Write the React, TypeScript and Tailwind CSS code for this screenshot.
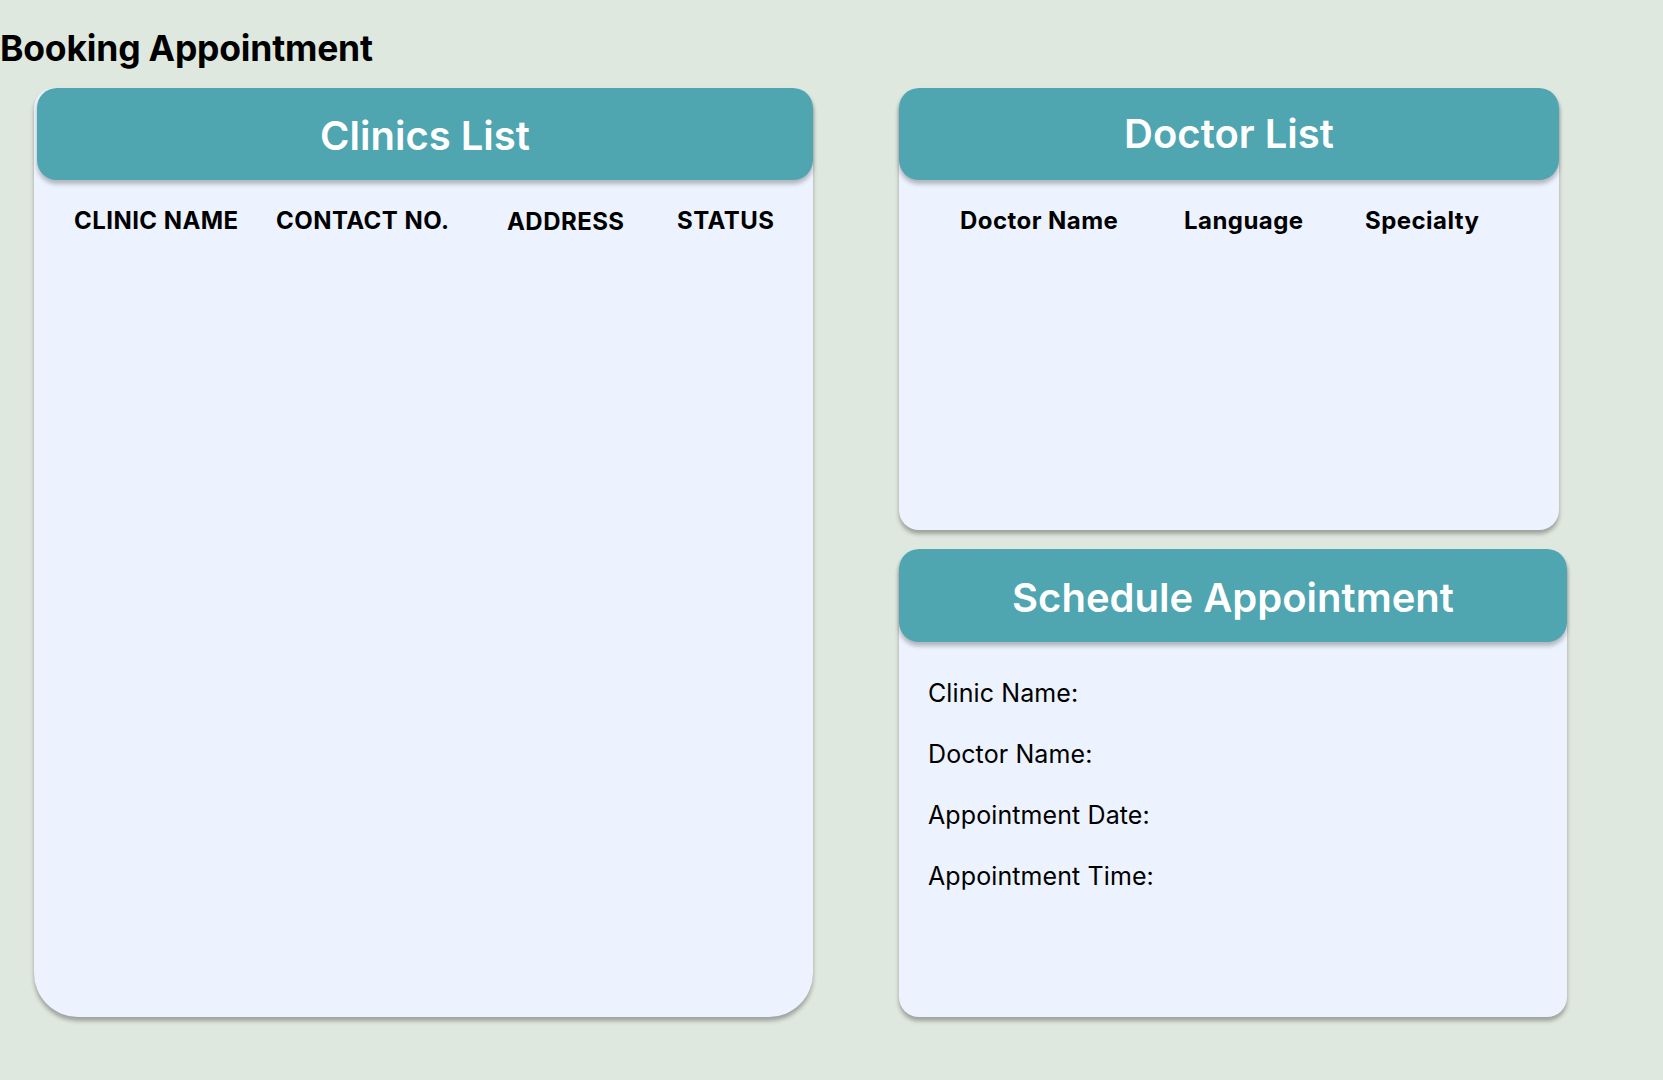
import React from "react";

const font = { fontFamily: "Inter, 'Noto Sans', sans-serif" };

export default function App() {
  return (
    <div className="min-h-[1080px] w-[1663px] bg-[#dfe8df] text-black" style={font}>
      <h1 className="pt-[29px] text-[35.5px] font-bold leading-[40px] tracking-[-0.2px]">Booking Appointment</h1>
      <div className="mt-[19px] flex items-start">
        {/* Clinics List */}
        <div className="ml-[34px] flex h-[929px] w-[779px] flex-col rounded-b-[44px] rounded-t-[20px] bg-[#ecf2fe] shadow-[0_4px_4px_rgba(0,0,0,0.3)]">
          <div className="ml-[3px] flex h-[92px] items-center justify-center rounded-[20px] bg-[#4fa5b0] shadow-[0_4px_4px_rgba(0,0,0,0.25)]">
            <span className="pt-[4px] text-[40px] font-semibold leading-none text-white">Clinics List</span>
          </div>
          <div className="mt-[27px] flex pl-[40px] text-[24px] font-bold leading-[28px] tracking-[0.45px]">
            <div className="w-[202px]">CLINIC NAME</div>
            <div className="w-[231px]">CONTACT NO.</div>
            <div className="w-[170px] pt-[1px]">ADDRESS</div>
            <div>STATUS</div>
          </div>
        </div>

        <div className="ml-[86px] flex flex-col">
          {/* Doctor List */}
          <div className="flex h-[442px] w-[660px] flex-col rounded-[20px] bg-[#ecf2fe] shadow-[0_4px_4px_rgba(0,0,0,0.3)]">
            <div className="flex h-[92px] items-center justify-center rounded-[20px] bg-[#4fa5b0] shadow-[0_4px_4px_rgba(0,0,0,0.25)]">
              <span className="text-[40px] font-semibold leading-none text-white">Doctor List</span>
            </div>
            <div className="mt-[27px] flex pl-[61px] text-[24px] font-bold leading-[28px] tracking-[0.45px]">
              <div className="w-[224px]">Doctor Name</div>
              <div className="w-[181px]">Language</div>
              <div>Specialty</div>
            </div>
          </div>

          {/* Schedule Appointment */}
          <div className="mt-[19px] flex h-[468px] w-[668px] flex-col rounded-[20px] bg-[#ecf2fe] shadow-[0_4px_4px_rgba(0,0,0,0.3)]">
            <div className="flex h-[93px] items-center justify-center rounded-[20px] bg-[#4fa5b0] shadow-[0_4px_4px_rgba(0,0,0,0.25)]">
              <span className="pt-[4px] text-[40px] font-semibold leading-none text-white">Schedule Appointment</span>
            </div>
            <div className="mt-[36px] flex flex-col gap-[31px] pl-[29px] text-[25px] leading-[30px] tracking-[0.1px]">
              <div>Clinic Name:</div>
              <div>Doctor Name:</div>
              <div>Appointment Date:</div>
              <div>Appointment Time:</div>
            </div>
          </div>
        </div>
      </div>
    </div>
  );
}
